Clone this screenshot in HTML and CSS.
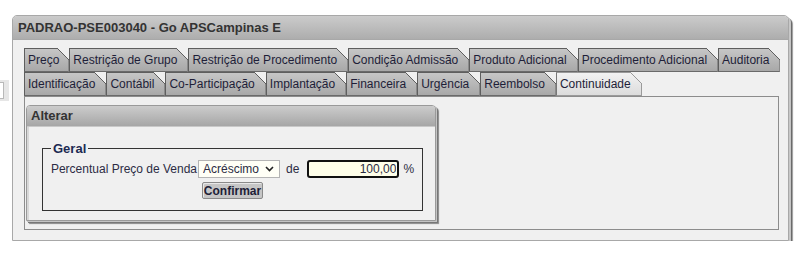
FILE: index.html
```html
<!DOCTYPE html>
<html lang="pt-BR">
<head>
<meta charset="utf-8">
<title>PADRAO-PSE003040</title>
<link rel="stylesheet" href="styles.css">
</head>
<body>
<div class="page">
  <div class="side">
    <div class="side-box"><span class="side-input"></span></div>
  </div>
  <div class="window">
    <div class="win-title">PADRAO-PSE003040 - Go APSCampinas E</div>
    <div class="win-body">
      <div class="tabs">
        <div class="tab-row">
          <span class="tab t-preco">Preço</span>
          <span class="tab">Restrição de Grupo</span>
          <span class="tab">Restrição de Procedimento</span>
          <span class="tab">Condição Admissão</span>
          <span class="tab">Produto Adicional</span>
          <span class="tab">Procedimento Adicional</span>
          <span class="tab">Auditoria</span>
        </div>
        <div class="tab-row">
          <span class="tab">Identificação</span>
          <span class="tab">Contábil</span>
          <span class="tab">Co-Participação</span>
          <span class="tab">Implantação</span>
          <span class="tab">Financeira</span>
          <span class="tab">Urgência</span>
          <span class="tab">Reembolso</span>
          <span class="tab active">Continuidade</span>
        </div>
      </div>
      <div class="content">
        <div class="panel">
          <div class="panel-title">Alterar</div>
          <div class="panel-body">
            <fieldset class="group">
              <legend>Geral</legend>
              <div class="form-row">
                <label class="lbl" for="tipo">Percentual Preço de Venda</label>
                <span class="select-wrap">
                  <select id="tipo" class="sel">
                    <option>Acréscimo</option>
                    <option>Desconto</option>
                  </select>
                  <svg class="chev" width="9" height="6" viewBox="0 0 9 6"><path d="M1 1 L4.5 4.5 L8 1" fill="none" stroke="#222" stroke-width="1.6"/></svg>
                </span>
                <span class="de">de</span>
                <input class="num" type="text" value="100,00">
                <span class="pct">%</span>
              </div>
              <div class="btn-row">
                <button class="btn" type="button">Confirmar</button>
              </div>
            </fieldset>
          </div>
        </div>
      </div>
    </div>
  </div>
</div>
</body>
</html>
```
FILE: styles.css
```css
html, body {
  margin: 0;
  padding: 0;
  background: #ffffff;
}
body {
  font-family: "Liberation Sans", Arial, sans-serif;
  font-size: 12px;
  color: #333;
}
.page {
  display: flex;
  align-items: flex-start;
  padding-top: 15px;
  gap: 3px;
}
.side {
  width: 9px;
  padding-top: 65px;
}
.side-box {
  height: 21px;
  background: #e6e6e6;
  display: flex;
  align-items: center;
}
.side-input {
  display: block;
  width: 3px;
  height: 15px;
  background: #fff;
  border: 1px solid #b8b8b8;
  border-left: none;
}
.window {
  width: 775px;
  border: 1px solid #a8a8a8;
  border-radius: 5px 5px 0 0;
  background: #f0f0f0;
  box-shadow: 1px 1px 0 #c8c8c8, 2px 2px 0 #c4c4c4, 3px 3px 0 #6a6a6a, 4px 4px 1px #9a9a9a;
}
.win-title {
  height: 23px;
  line-height: 23px;
  padding-left: 5px;
  font-size: 13px;
  font-weight: bold;
  color: #333;
  background: linear-gradient(#cbcbcb, #adadad);
  border-bottom: 1px solid #a8a8a8;
  border-radius: 4px 4px 0 0;
}
.win-body {
  padding: 8px 9px 10px 11px;
}
.tab-row {
  display: flex;
  height: 24px;
}
.tab {
  position: relative;
  box-sizing: border-box;
  height: 24px;
  line-height: 22px;
  padding: 0 10px 0 3px;
  border: 1px solid #5e5e5e;
  border-right-color: #8a8a8a;
  border-bottom-color: #6a6a6a;
  background: linear-gradient(#c6c6c6, #a8a8a8);
  color: #1e1e38;
  white-space: nowrap;
}
.tab.t-preco {
  padding-right: 9px;
}
.tab::after {
  content: "";
  position: absolute;
  top: -1px;
  right: -1px;
  width: 12px;
  height: 12px;
  background: linear-gradient(to bottom left, #f0f0f0 calc(50% - 0.6px), #5e5e5e calc(50% - 0.6px), #5e5e5e calc(50% + 0.6px), transparent calc(50% + 0.6px));
}
.tab.active {
  background: linear-gradient(#f2f2f2, #dcdcdc);
  border-color: #9a9a9a;
  border-left-color: #777;
  color: #1e1e38;
}
.tab.active::after {
  background: linear-gradient(to bottom left, #f0f0f0 calc(50% - 0.6px), #9a9a9a calc(50% - 0.6px), #9a9a9a calc(50% + 0.6px), transparent calc(50% + 0.6px));
}
.content {
  box-sizing: border-box;
  height: 134px;
  border: 1px solid #8c8c8c;
  background: #f0f0f0;
  padding: 8px 0 0 1px;
}
.panel {
  width: 408px;
  border: 1px solid #9a9a9a;
  border-radius: 4px 4px 0 0;
  background: #f0f0f0;
  box-shadow: 1px 1px 0 #c4c4c4, 2px 2px 0 #777, 3px 3px 1px #8a8a8a;
}
.panel-title {
  height: 20px;
  line-height: 20px;
  padding-left: 4px;
  font-size: 13px;
  font-weight: bold;
  color: #333;
  background: linear-gradient(#cccccc, #a6a6a6);
  border-radius: 3px 3px 0 0;
  border-bottom: 1px solid #c8c8c8;
}
.panel-body {
  padding: 14px 12px 9px 13px;
  border-left: 2px solid #d8d8d8;
}
.group {
  margin: 0;
  padding: 0 0 11px 0;
  border: 1px solid #333;
  text-align: center;
}
.group legend {
  margin-left: 8px;
  padding: 0 2px;
  font-size: 13px;
  font-weight: bold;
  color: #1c2a52;
  text-align: left;
}
.form-row {
  display: flex;
  justify-content: center;
  align-items: center;
  height: 18px;
  margin-top: 4px;
}
.lbl {
  color: #2c2c44;
  margin-right: 1px;
}
.select-wrap {
  position: relative;
  display: inline-block;
  height: 18px;
}
.sel {
  appearance: none;
  -webkit-appearance: none;
  box-sizing: border-box;
  width: 82px;
  height: 18px;
  margin: 0;
  padding: 0 0 0 4px;
  border: 1px solid #b4b4b4;
  border-radius: 0;
  background: #fffff6;
  font-family: "Liberation Sans", Arial, sans-serif;
  font-size: 12px;
  color: #2c2c44;
}
.chev {
  position: absolute;
  right: 6px;
  top: 6px;
  pointer-events: none;
}
.de {
  margin: 0 8px 0 6px;
  color: #2c2c44;
}
.num {
  box-sizing: border-box;
  width: 92px;
  height: 18px;
  margin: 0;
  padding: 0 1px 0 0;
  border: 2px solid #111;
  border-radius: 3px;
  background: #ffffea;
  text-align: right;
  font-family: "Liberation Sans", Arial, sans-serif;
  font-size: 12px;
  color: #2c2c44;
}
.pct {
  margin-left: 4px;
  color: #2c2c44;
}
.btn-row {
  margin-top: 4px;
  display: flex;
  justify-content: center;
}
.btn {
  box-sizing: border-box;
  height: 17px;
  margin: 0;
  padding: 0 1px;
  border: 1px solid #8a8a8a;
  border-radius: 2px;
  background: #c6c6c6;
  box-shadow: inset 1px 1px 0 #e8e8e8;
  font-family: "Liberation Sans", Arial, sans-serif;
  font-size: 12px;
  font-weight: bold;
  line-height: 14px;
  color: #1e1e38;
}
```
